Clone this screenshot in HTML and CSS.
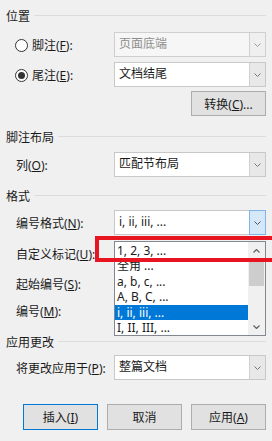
FILE: index.html
```html
<!DOCTYPE html>
<html lang="zh-CN">

<head>
    <meta charset="UTF-8">
    <meta name="viewport" content="width=device-width, initial-scale=1.0">
    <title>脚注和尾注</title>
    <link rel="stylesheet" href="styles.css">
</head>

<body>
    <div class="dialog">

        <div class="groupTitle group1"><span>位置</span><i class="rule"></i></div>
        <div class="row row1">
            <span class="radio"></span>
            <span class="label">脚注(<u>F</u>):</span>
            <div class="select disabled">
                <span class="value">页面底端</span>
                <span class="arrow"><svg width="7" height="4" viewBox="0 0 7 4"><path d="M0.5 0.5 L3.5 3.5 L6.5 0.5" fill="none" stroke="#9a9a9a" stroke-width="1"/></svg></span>
            </div>
        </div>
        <div class="row row2">
            <span class="radio checked"></span>
            <span class="label">尾注(<u>E</u>):</span>
            <div class="select">
                <span class="value">文档结尾</span>
                <span class="arrow"><svg width="7" height="4" viewBox="0 0 7 4"><path d="M0.5 0.5 L3.5 3.5 L6.5 0.5" fill="none" stroke="#777" stroke-width="1"/></svg></span>
            </div>
        </div>
        <div class="buttonRow convert">
            <button class="btn">转换(<u>C</u>)...</button>
        </div>

        <div class="groupTitle group2"><span>脚注布局</span><i class="rule"></i></div>
        <div class="row row3">
            <span class="label indent">列(<u>O</u>):</span>
            <div class="select">
                <span class="value">匹配节布局</span>
                <span class="arrow"><svg width="7" height="4" viewBox="0 0 7 4"><path d="M0.5 0.5 L3.5 3.5 L6.5 0.5" fill="none" stroke="#777" stroke-width="1"/></svg></span>
            </div>
        </div>

        <div class="groupTitle group3"><span>格式</span><i class="rule"></i></div>
        <div class="row row4">
            <span class="label indent">编号格式(<u>N</u>):</span>
            <div class="select open">
                <span class="value">i, ii, iii, ...</span>
                <span class="arrow"><svg width="7" height="4" viewBox="0 0 7 4"><path d="M0.5 0.5 L3.5 3.5 L6.5 0.5" fill="none" stroke="#555" stroke-width="1"/></svg></span>
            </div>
        </div>
        <div class="row row5">
            <span class="label indent">自定义标记(<u>U</u>):</span>
        </div>
        <div class="row row6">
            <span class="label indent">起始编号(<u>S</u>):</span>
        </div>
        <div class="row row7">
            <span class="label indent">编号(<u>M</u>):</span>
        </div>

        <div class="groupTitle group4"><span>应用更改</span><i class="rule"></i></div>
        <div class="row row8">
            <span class="label indent">将更改应用于(<u>P</u>):</span>
            <div class="select">
                <span class="value">整篇文档</span>
                <span class="arrow"><svg width="7" height="4" viewBox="0 0 7 4"><path d="M0.5 0.5 L3.5 3.5 L6.5 0.5" fill="none" stroke="#777" stroke-width="1"/></svg></span>
            </div>
        </div>

        <div class="buttonRow footer">
            <button class="btn default">插入(<u>I</u>)</button>
            <button class="btn">取消</button>
            <button class="btn">应用(<u>A</u>)</button>
        </div>

        <!-- open dropdown of 编号格式 -->
        <div class="dropList">
            <div class="items">
                <div class="item">1, 2, 3, ...</div>
                <div class="item">全角 ...</div>
                <div class="item">a, b, c, ...</div>
                <div class="item">A, B, C, ...</div>
                <div class="item selected">i, ii, iii, ...</div>
                <div class="item">I, II, III, ...</div>
            </div>
            <div class="scrollBar">
                <span class="scrollUp"><svg width="7" height="4" viewBox="0 0 7 4"><path d="M0.5 3.5 L3.5 0.5 L6.5 3.5" fill="none" stroke="#606060" stroke-width="1.2"/></svg></span>
                <span class="thumb"></span>
                <span class="scrollDown"><svg width="7" height="4" viewBox="0 0 7 4"><path d="M0.5 0.5 L3.5 3.5 L6.5 0.5" fill="none" stroke="#606060" stroke-width="1.2"/></svg></span>
            </div>
        </div>

        <div class="redMark"></div>
    </div>
</body>

</html>
```

FILE: styles.css
```css
html,
body {
    margin: 0;
    padding: 0;
    overflow: hidden;
}

body {
    background: #f0f0f0;
    color: #1a1a1a;
    font-family: "Segoe UI", "Noto Sans", "Noto Sans CJK SC", sans-serif;
    font-size: 12px;
}

.dialog {
    position: relative;
    width: 272px;
    height: 441px;
    padding: 0 6px;
    box-sizing: border-box;
}

u {
    text-decoration: underline;
    text-underline-offset: 1px;
}

.groupTitle {
    display: flex;
    align-items: center;
    height: 16px;
    line-height: 16px;
}

.groupTitle span {
    position: relative;
    top: 2px;
}

.rule {
    flex: 1;
    height: 1px;
    margin-left: 4px;
    background: #dcdcdc;
}

.group1 {
    margin-top: 7px;
}

.group2 {
    margin-top: 12px;
}

.group3 {
    margin-top: 50px;
    margin-top: 10px;
}

.group4 {
    margin-top: 10px;
}

.row {
    display: flex;
    align-items: center;
    height: 25px;
}

.row1 {
    margin-top: 9px;
}

.row2 {
    margin-top: 5px;
}

.row3 {
    margin-top: 8px;
}

.row4 {
    margin-top: 7px;
}

.row5 {
    margin-top: 6px;
}

.row6 {
    margin-top: 5px;
}

.row7 {
    margin-top: 2px;
}

.row8 {
    margin-top: 6px;
}

.label {
    white-space: nowrap;
}

.indent {
    margin-left: 10px;
}

.radio {
    width: 13px;
    height: 13px;
    margin-left: 9px;
    margin-right: 4px;
    border: 1px solid #333;
    border-radius: 50%;
    background: #fff;
    box-sizing: border-box;
    position: relative;
    top: 1px;
}

.radio.checked::after {
    content: "";
    position: absolute;
    left: 2px;
    top: 2px;
    width: 7px;
    height: 7px;
    border-radius: 50%;
    background: #333;
}

.select {
    display: flex;
    align-items: stretch;
    width: 152px;
    height: 25px;
    margin-left: auto;
    border: 1px solid #c8c8c8;
    background: #fff;
    box-sizing: border-box;
}

.select.disabled {
    background: #f6f6f6;
    border-color: #cfcfcf;
    color: #8d8d8d;
}

.value {
    flex: 1;
    padding-left: 4px;
    line-height: 22px;
}

.arrow {
    display: flex;
    align-items: center;
    justify-content: center;
    width: 15px;
    margin: 0;
    border-left: 1px solid #d0d0d0;
    background: #e8e8e8;
}

.disabled .arrow {
    background: #efefef;
}

.open .arrow {
    border: 1px solid #7eb4ea;
    background: #d5e8f9;
    margin: -1px -1px -1px 0;
}

.buttonRow {
    display: flex;
    justify-content: flex-end;
    gap: 9px;
}

.convert {
    margin-top: 4px;
}

.footer {
    margin-top: 24px;
}

.btn {
    width: 75px;
    height: 25px;
    padding: 0;
    border: 1px solid #adadad;
    background: #e1e1e1;
    color: #1a1a1a;
    font-family: inherit;
    font-size: 12px;
}

.footer .btn {
    height: 26px;
}

.btn.default {
    border-color: #0078d7;
}

/* dropdown list lies over the form */
.dropList {
    position: absolute;
    left: 114px;
    top: 234px;
    width: 152px;
    height: 95px;
    border: 1px solid #828790;
    background: #fff;
    box-sizing: border-box;
}

.items {
    padding-top: 1px;
    margin-right: 17px;
}

.item {
    height: 15.4px;
    line-height: 15.4px;
    padding-left: 2px;
    white-space: nowrap;
}

.item.selected {
    background: #0078d7;
    color: #fff;
}

.scrollBar {
    position: absolute;
    top: 0;
    right: 0;
    bottom: 0;
    width: 17px;
    background: #f0f0f0;
}

.scrollUp,
.scrollDown {
    position: absolute;
    left: 0;
    width: 17px;
    height: 17px;
    display: flex;
    align-items: center;
    justify-content: center;
}

.scrollUp {
    top: 0;
}

.scrollDown {
    bottom: 0;
}

.thumb {
    position: absolute;
    left: 1px;
    top: 20px;
    width: 15px;
    height: 24px;
    background: #cdcdcd;
}

.redMark {
    position: absolute;
    left: 95px;
    top: 229px;
    width: 190px;
    height: 26px;
    border: 4px solid #e8141f;
    box-sizing: border-box;
}
```
